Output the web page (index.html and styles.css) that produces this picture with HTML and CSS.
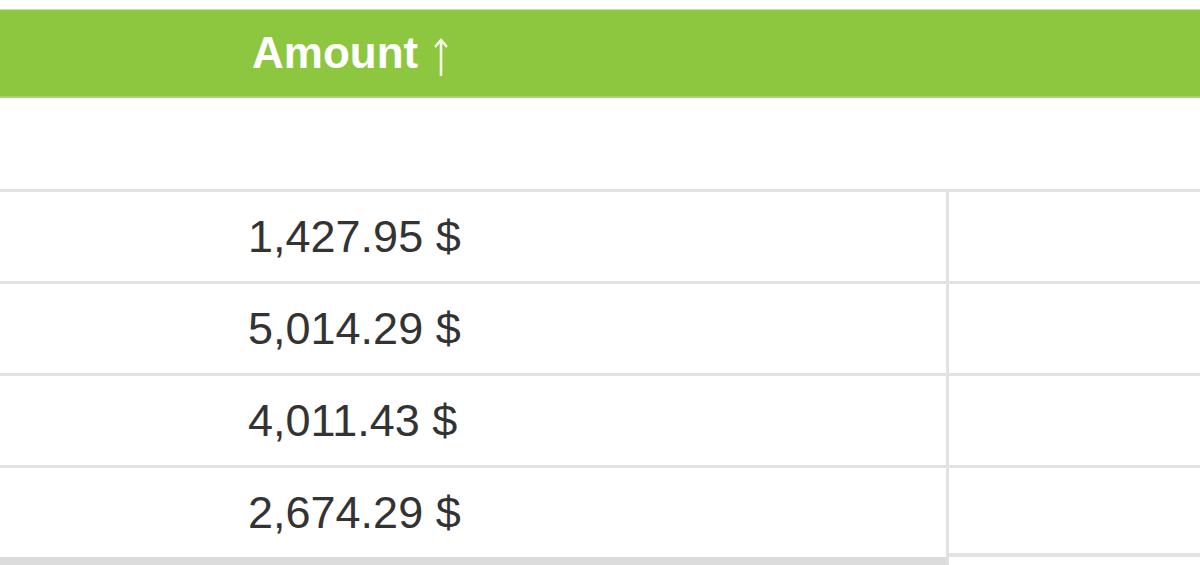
FILE: index.html
```html
<!DOCTYPE html>
<html>
<head>
<meta charset="utf-8">
<link rel="stylesheet" href="styles.css">
</head>
<body>
<div class="table">
  <div class="head">
    <div class="th">Amount<svg class="arrow" width="20" height="38" viewBox="0 0 20 38"><path d="M10 2 V38 M4 9 L10 2 L16 9" fill="none" stroke="#f4f9e8" stroke-width="2.6"/></svg></div>
  </div>
  <div class="filter"></div>
  <div class="row"><div class="cell amount">1,427.95 $</div><div class="cell"></div></div>
  <div class="row"><div class="cell amount">5,014.29 $</div><div class="cell"></div></div>
  <div class="row"><div class="cell amount">4,011.43 $</div><div class="cell"></div></div>
  <div class="row last"><div class="cell amount">2,674.29 $</div><div class="cell"></div></div>
</div>
</body>
</html>
```
FILE: styles.css
```css
html, body {
  margin: 0;
  padding: 0;
  background: #fff;
}
body {
  font-family: "Liberation Sans", Arial, sans-serif;
  overflow: hidden;
}
.table {
  width: 1200px;
  padding-top: 9px;
}
.head {
  height: 86px;
  background: #8dc63f;
  border-top: 1px solid #c9e3a6;
  border-bottom: 2px solid #a9cf7a;
  display: flex;
  align-items: center;
}
.th {
  padding-left: 252px;
  color: #fff;
  font-weight: bold;
  font-size: 44px;
  line-height: 1;
  display: flex;
  align-items: center;
}
.arrow {
  margin-left: 13px;
  margin-top: 8px;
}
.filter {
  height: 91px;
  border-bottom: 3px solid #e2e2e2;
}
.row {
  display: grid;
  grid-template-columns: 949px 1fr;
  align-items: start;
}
.cell {
  height: 89px;
  border-bottom: 3px solid #e2e2e2;
  display: flex;
  align-items: center;
}
.amount {
  padding-left: 248px;
  border-right: 3px solid #e2e2e2;
  font-size: 45px;
  color: #333;
}
.last .amount {
  border-bottom: 8px solid #dcdcdc;
}
.last .cell + .cell {
  height: 85px;
  border-bottom-width: 4px;
}
```
